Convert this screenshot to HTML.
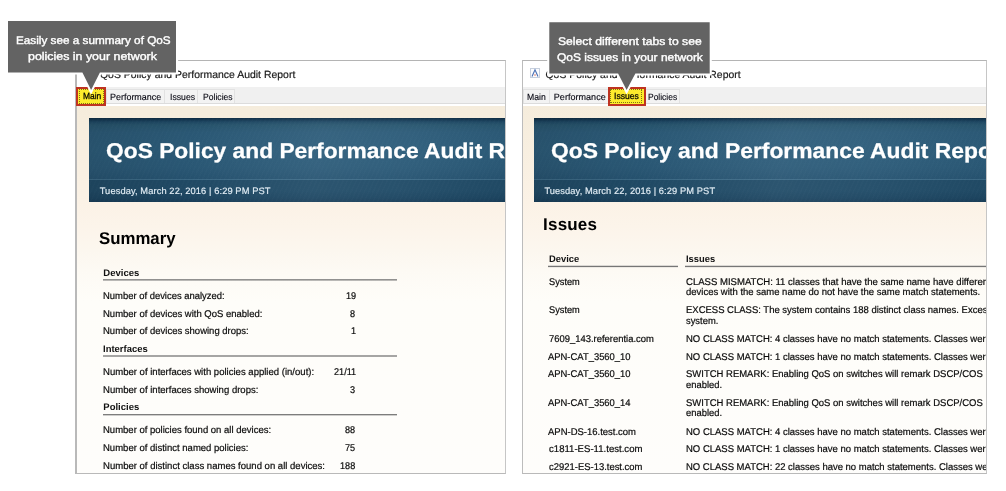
<!DOCTYPE html>
<html lang="en">
<head>
<meta charset="utf-8">
<title>QoS Policy and Performance Audit Report</title>
<style>
*{box-sizing:border-box;margin:0;padding:0}
html,body{width:1006px;height:491px;background:#fff;overflow:hidden}
body{position:relative;font-family:"Liberation Sans",sans-serif;color:#1c1c1c;font-size:10px}
.win{will-change:transform;position:absolute;top:60px;height:414px;border:1px solid #b4b4b4;border-right-color:#c6c6c6;border-bottom-color:#b9b9b9;background:#fff;overflow:hidden}
#w1{left:75px;width:431px;border-left:2px solid #b9b9b9}
#w2{left:522px;width:465px;border-left-color:#bcbcbc}
.t{position:absolute;white-space:pre;text-rendering:geometricPrecision;transform-origin:0 0;-webkit-text-stroke:0.2px currentColor}
.cb{-webkit-text-stroke:0.38px #fff}
.t.tx{-webkit-text-stroke:0.12px currentColor}
.t.ty{-webkit-text-stroke:0.25px #000}
.bt{-webkit-text-stroke:0.25px #fff}
.dt{-webkit-text-stroke:0.15px #e2edf5}
.ovc{position:absolute;left:0;top:0;width:1006px;height:491px;z-index:6;will-change:transform}
.tabs{position:absolute;left:0;right:0;top:26px;height:17px;background:#f0f0f0;border-bottom:1px solid #dcdcdc}
.tb{position:absolute;top:28px;height:14px;border:1px solid #e2e2e2;border-bottom:0;background:#f3f3f3}
.page{position:absolute;left:0;right:0;top:45px;bottom:0;background:linear-gradient(#f5ecdc 0,#f6eddd 12px,#fbf2e6 96px,#fcf4ea 120px,#fcf7ef 145px,#fdfaf4 165px,#fefdf9 195px,#fefdfb 100%)}
.ban{position:absolute;top:57px;height:84px;right:0;background:linear-gradient(100deg,rgba(0,0,0,.12) 0,rgba(0,0,0,.04) 25%,rgba(255,255,255,.05) 55%,rgba(255,255,255,.03) 75%,rgba(0,0,0,.04) 100%),repeating-linear-gradient(115deg,rgba(255,255,255,.013) 0,rgba(255,255,255,.013) 1.5px,rgba(0,0,0,0) 1.5px,rgba(0,0,0,0) 4px),linear-gradient(#0e2c43 0,#153a55 2px,#1f4a66 4px,#28566f 7px,#2c5b79 14px,#2d5d7b 30px,#2b5a78 50px,#275472 61px,#3c6a87 61px,#3c6a87 62px,#214c68 62px,#214c68 72px,#1d4662 80px,#193f5a 84px)}
.ln{position:absolute;height:2px}
.l1{background:linear-gradient(rgba(118,118,118,.8) 0,rgba(118,118,118,.8) 1px,rgba(118,118,118,.5) 1px,rgba(118,118,118,.5) 2px)}
.l2{background:linear-gradient(rgba(118,118,118,.65) 0,rgba(118,118,118,.65) 1px,rgba(118,118,118,.65) 1px,rgba(118,118,118,.65) 2px)}
.l3{background:linear-gradient(rgba(118,118,118,.95) 0,rgba(118,118,118,.95) 1px,rgba(118,118,118,.35) 1px,rgba(118,118,118,.35) 2px)}
.l4{height:3px;background:linear-gradient(rgba(118,118,118,.25) 0,rgba(118,118,118,.25) 1px,rgba(118,118,118,1) 1px,rgba(118,118,118,1) 2px,rgba(118,118,118,.12) 2px,rgba(118,118,118,.12) 3px)}
.hl{position:absolute;background:#fdeb2c;border:2px solid #be3321;z-index:3}
.hl i{position:absolute;left:1px;top:0;right:0;bottom:0;border:1px dotted rgba(50,35,0,.6)}
.ptr{position:absolute;z-index:5}
</style>
</head>
<body>

<div class="win" id="w1">
<div class="tabs"></div>
<div class="tb" style="left:29px;width:59px"></div>
<div class="tb" style="left:87px;width:34px"></div>
<div class="tb" style="left:120px;width:38px"></div>
<div class="page"></div>
<div class="ban" style="left:12px"></div>
<div class="ln l1" style="left:26px;top:218px;width:294px"></div>
<div class="ln l2" style="left:26px;top:294px;width:294px"></div>
<div class="ln l3" style="left:26px;top:353px;width:294px"></div>
<div class="t" style="left:23.00px;top:8px;font-size:10.4px;line-height:13px;letter-spacing:0.033px;color:#1a1a1a">QoS Policy and Performance Audit Report</div>
<div class="t tx" style="left:32.80px;top:30px;font-size:9.0px;line-height:12px;letter-spacing:0.000px;color:#050510;transform:scaleX(0.9939)">Performance</div>
<div class="t tx" style="left:92.50px;top:30px;font-size:9.0px;line-height:12px;letter-spacing:0.000px;color:#050510;transform:scaleX(0.9619)">Issues</div>
<div class="t tx" style="left:125.60px;top:30px;font-size:9.0px;line-height:12px;letter-spacing:0.000px;color:#050510;transform:scaleX(0.9552)">Policies</div>
<div class="t bt" style="left:29.20px;top:77px;font-size:21.4px;line-height:26px;letter-spacing:0.000px;color:#ffffff;transform:scaleX(1.0647);font-weight:bold">QoS Policy and Performance Audit Report</div>
<div class="t dt" style="left:22.70px;top:124px;font-size:9.3px;line-height:12px;letter-spacing:0.098px;color:#e2edf5">Tuesday, March 22, 2016 | 6:29 PM PST</div>
<div class="t" style="left:22.40px;top:167px;font-size:17px;line-height:21px;letter-spacing:0.000px;color:#000;transform:scaleX(0.9881);font-weight:bold;-webkit-text-stroke:0">Summary</div>
<div class="t" style="left:26.30px;top:206px;font-size:9.5px;line-height:13px;letter-spacing:0.011px;color:#111;font-weight:bold;-webkit-text-stroke:0">Devices</div>
<div class="t" style="left:26.30px;top:229px;font-size:9.8px;line-height:13px;letter-spacing:0.000px;color:#0a0a0a;transform:scaleX(0.9625)">Number of devices analyzed:</div>
<div class="t" style="left:26.30px;top:247px;font-size:9.8px;line-height:13px;letter-spacing:0.000px;color:#0a0a0a;transform:scaleX(0.9693)">Number of devices with QoS enabled:</div>
<div class="t" style="left:26.30px;top:264px;font-size:9.8px;line-height:13px;letter-spacing:0.000px;color:#0a0a0a;transform:scaleX(0.9694)">Number of devices showing drops:</div>
<div class="t" style="left:26.30px;top:282px;font-size:9.5px;line-height:13px;letter-spacing:0.000px;color:#111;transform:scaleX(0.9955);font-weight:bold;-webkit-text-stroke:0">Interfaces</div>
<div class="t" style="left:26.30px;top:305px;font-size:9.8px;line-height:13px;letter-spacing:0.000px;color:#0a0a0a;transform:scaleX(0.9741)">Number of interfaces with policies applied (in/out):</div>
<div class="t" style="left:26.30px;top:323px;font-size:9.8px;line-height:13px;letter-spacing:0.000px;color:#0a0a0a;transform:scaleX(0.9740)">Number of interfaces showing drops:</div>
<div class="t" style="left:26.30px;top:340px;font-size:9.5px;line-height:13px;letter-spacing:0.011px;color:#111;font-weight:bold;-webkit-text-stroke:0">Policies</div>
<div class="t" style="left:26.30px;top:363px;font-size:9.8px;line-height:13px;letter-spacing:0.000px;color:#0a0a0a;transform:scaleX(0.9707)">Number of policies found on all devices:</div>
<div class="t" style="left:26.30px;top:381px;font-size:9.8px;line-height:13px;letter-spacing:0.000px;color:#0a0a0a;transform:scaleX(0.9710)">Number of distinct named policies:</div>
<div class="t" style="left:26.30px;top:399px;font-size:9.8px;line-height:13px;letter-spacing:0.000px;color:#0a0a0a;transform:scaleX(0.9730)">Number of distinct class names found on all devices:</div>
<div class="t" style="left:269.18px;top:229px;font-size:9.8px;line-height:13px;letter-spacing:0.000px;color:#0a0a0a;transform:scaleX(0.9300)">19</div>
<div class="t" style="left:273.32px;top:247px;font-size:9.8px;line-height:13px;letter-spacing:0.000px;color:#0a0a0a;transform:scaleX(0.9300)">8</div>
<div class="t" style="left:274.25px;top:264px;font-size:9.8px;line-height:13px;letter-spacing:0.000px;color:#0a0a0a;transform:scaleX(0.9300)">1</div>
<div class="t" style="left:257.19px;top:305px;font-size:9.8px;line-height:13px;letter-spacing:0.000px;color:#0a0a0a;transform:scaleX(0.9300)">21/11</div>
<div class="t" style="left:273.32px;top:323px;font-size:9.8px;line-height:13px;letter-spacing:0.000px;color:#0a0a0a;transform:scaleX(0.9300)">3</div>
<div class="t" style="left:268.25px;top:363px;font-size:9.8px;line-height:13px;letter-spacing:0.000px;color:#0a0a0a;transform:scaleX(0.9300)">88</div>
<div class="t" style="left:268.25px;top:381px;font-size:9.8px;line-height:13px;letter-spacing:0.000px;color:#0a0a0a;transform:scaleX(0.9300)">75</div>
<div class="t" style="left:263.19px;top:399px;font-size:9.8px;line-height:13px;letter-spacing:0.000px;color:#0a0a0a;transform:scaleX(0.9300)">188</div>
</div>

<div class="win" id="w2">
<svg class="t" style="left:6.6px;top:7px" width="10" height="10" viewBox="0 0 10 10"><rect x="0.5" y="0.5" width="9" height="9" fill="#fbfcfe" stroke="#c6cfdd"/><path d="M2 8.6 L5 1.8 L8 8.6" fill="none" stroke="#4a70b4" stroke-width="1.15"/><circle cx="5" cy="7" r="0.75" fill="#d4604a"/></svg>
<div class="tabs"></div>
<div class="tb" style="left:0;width:27px"></div>
<div class="tb" style="left:26px;width:60px"></div>
<div class="tb" style="left:122px;width:35px"></div>
<div class="page"></div>
<div class="ban" style="left:11px"></div>
<div class="ln l4" style="left:25px;top:204px;width:130px"></div>
<div class="ln l4" style="left:162px;top:204px;width:320px"></div>
<div class="t" style="left:22.50px;top:8px;font-size:10.4px;line-height:13px;letter-spacing:0.028px;color:#1a1a1a">QoS Policy and Performance Audit Report</div>
<div class="t tx" style="left:3.80px;top:30px;font-size:9.0px;line-height:12px;letter-spacing:0.000px;color:#050510;transform:scaleX(0.9589)">Main</div>
<div class="t tx" style="left:30.80px;top:30px;font-size:9.0px;line-height:12px;letter-spacing:0.038px;color:#050510">Performance</div>
<div class="t tx" style="left:124.70px;top:30px;font-size:9.0px;line-height:12px;letter-spacing:0.000px;color:#050510;transform:scaleX(0.9393)">Policies</div>
<div class="t bt" style="left:27.60px;top:77px;font-size:21.4px;line-height:26px;letter-spacing:0.000px;color:#ffffff;transform:scaleX(1.0681);font-weight:bold">QoS Policy and Performance Audit Report</div>
<div class="t dt" style="left:21.40px;top:124px;font-size:9.3px;line-height:12px;letter-spacing:0.095px;color:#e2edf5">Tuesday, March 22, 2016 | 6:29 PM PST</div>
<div class="t" style="left:20.10px;top:153px;font-size:17px;line-height:21px;letter-spacing:0.186px;color:#000;font-weight:bold;-webkit-text-stroke:0">Issues</div>
<div class="t" style="left:25.60px;top:192px;font-size:9.5px;line-height:13px;letter-spacing:0.000px;color:#111;transform:scaleX(0.9852);font-weight:bold;-webkit-text-stroke:0">Device</div>
<div class="t" style="left:162.50px;top:192px;font-size:9.5px;line-height:13px;letter-spacing:0.000px;color:#111;transform:scaleX(0.9866);font-weight:bold;-webkit-text-stroke:0">Issues</div>
<div class="t" style="left:25.60px;top:215px;font-size:9.8px;line-height:13px;letter-spacing:0.000px;color:#0a0a0a;transform:scaleX(0.9415)">System</div>
<div class="t" style="left:162.50px;top:215px;font-size:9.8px;line-height:13px;letter-spacing:0.000px;color:#0a0a0a;transform:scaleX(0.9747)">CLASS MISMATCH: 11 classes that have the same name have different</div>
<div class="t" style="left:162.50px;top:225px;font-size:9.8px;line-height:13px;letter-spacing:0.000px;color:#0a0a0a;transform:scaleX(0.9699)">devices with the same name do not have the same match statements.</div>
<div class="t" style="left:25.60px;top:243px;font-size:9.8px;line-height:13px;letter-spacing:0.000px;color:#0a0a0a;transform:scaleX(0.9415)">System</div>
<div class="t" style="left:162.50px;top:243px;font-size:9.8px;line-height:13px;letter-spacing:0.000px;color:#0a0a0a;transform:scaleX(0.9683)">EXCESS CLASS: The system contains 188 distinct class names. Excessive</div>
<div class="t" style="left:162.50px;top:254px;font-size:9.8px;line-height:13px;letter-spacing:0.000px;color:#0a0a0a;transform:scaleX(0.9568)">system.</div>
<div class="t" style="left:25.60px;top:272px;font-size:9.8px;line-height:13px;letter-spacing:0.000px;color:#0a0a0a;transform:scaleX(0.9626)">7609_143.referentia.com</div>
<div class="t" style="left:162.50px;top:272px;font-size:9.8px;line-height:13px;letter-spacing:0.000px;color:#0a0a0a;transform:scaleX(0.9696)">NO CLASS MATCH: 4 classes have no match statements. Classes were</div>
<div class="t" style="left:25.30px;top:290px;font-size:9.8px;line-height:13px;letter-spacing:0.000px;color:#0a0a0a;transform:scaleX(0.9617)">APN-CAT_3560_10</div>
<div class="t" style="left:162.50px;top:290px;font-size:9.8px;line-height:13px;letter-spacing:0.000px;color:#0a0a0a;transform:scaleX(0.9696)">NO CLASS MATCH: 1 classes have no match statements. Classes were</div>
<div class="t" style="left:25.30px;top:307px;font-size:9.8px;line-height:13px;letter-spacing:0.000px;color:#0a0a0a;transform:scaleX(0.9617)">APN-CAT_3560_10</div>
<div class="t" style="left:162.50px;top:307px;font-size:9.8px;line-height:13px;letter-spacing:0.000px;color:#0a0a0a;transform:scaleX(0.9682)">SWITCH REMARK: Enabling QoS on switches will remark DSCP/COS</div>
<div class="t" style="left:162.50px;top:318px;font-size:9.8px;line-height:13px;letter-spacing:0.000px;color:#0a0a0a;transform:scaleX(0.9602)">enabled.</div>
<div class="t" style="left:25.30px;top:336px;font-size:9.8px;line-height:13px;letter-spacing:0.000px;color:#0a0a0a;transform:scaleX(0.9617)">APN-CAT_3560_14</div>
<div class="t" style="left:162.50px;top:336px;font-size:9.8px;line-height:13px;letter-spacing:0.000px;color:#0a0a0a;transform:scaleX(0.9682)">SWITCH REMARK: Enabling QoS on switches will remark DSCP/COS</div>
<div class="t" style="left:162.50px;top:346px;font-size:9.8px;line-height:13px;letter-spacing:0.000px;color:#0a0a0a;transform:scaleX(0.9602)">enabled.</div>
<div class="t" style="left:25.30px;top:365px;font-size:9.8px;line-height:13px;letter-spacing:0.000px;color:#0a0a0a;transform:scaleX(0.9674)">APN-DS-16.test.com</div>
<div class="t" style="left:162.50px;top:365px;font-size:9.8px;line-height:13px;letter-spacing:0.000px;color:#0a0a0a;transform:scaleX(0.9696)">NO CLASS MATCH: 4 classes have no match statements. Classes were</div>
<div class="t" style="left:25.60px;top:382px;font-size:9.8px;line-height:13px;letter-spacing:0.000px;color:#0a0a0a;transform:scaleX(0.9789)">c1811-ES-11.test.com</div>
<div class="t" style="left:162.50px;top:382px;font-size:9.8px;line-height:13px;letter-spacing:0.000px;color:#0a0a0a;transform:scaleX(0.9696)">NO CLASS MATCH: 1 classes have no match statements. Classes were</div>
<div class="t" style="left:25.60px;top:400px;font-size:9.8px;line-height:13px;letter-spacing:0.000px;color:#0a0a0a;transform:scaleX(0.9642)">c2921-ES-13.test.com</div>
<div class="t" style="left:162.50px;top:400px;font-size:9.8px;line-height:13px;letter-spacing:0.000px;color:#0a0a0a;transform:scaleX(0.9685)">NO CLASS MATCH: 22 classes have no match statements. Classes were</div>
</div>

<div class="hl" style="left:76px;top:87px;width:30px;height:19px"><i></i></div>
<div class="hl" style="left:608px;top:87px;width:38px;height:19px"><i style="left:0;right:2px;bottom:1px"></i></div>

<svg class="ptr" style="left:0;top:0" width="1006" height="491" viewBox="0 0 1006 491">
<path d="M8 21 H176 V72.4 H99.9 L91.1 89.9 L82.4 72.4 H8 Z" fill="#636363" stroke="#ffffff" stroke-width="4.2" stroke-linejoin="miter" paint-order="stroke"/>
<path d="M549.3 22.2 H709.7 V73.4 H635.4 L626.6 90 L618.1 73.4 H549.3 Z" fill="#636363" stroke="#ffffff" stroke-width="4.2" stroke-linejoin="miter" paint-order="stroke"/>
</svg>
<div class="ovc">
<div class="t tx ty" style="left:82.70px;top:90px;font-size:9.0px;line-height:12px;letter-spacing:0.000px;color:#000;transform:scaleX(0.9384)">Main</div>
<div class="t tx ty" style="left:614.00px;top:90px;font-size:9.0px;line-height:12px;letter-spacing:0.000px;color:#000;transform:scaleX(0.9543)">Issues</div>
<div class="t cb" style="left:15.90px;top:34px;font-size:11px;line-height:14px;letter-spacing:0.000px;color:#ffffff;transform:scaleX(1.0675)">Easily see a summary of QoS</div>
<div class="t cb" style="left:28.30px;top:50px;font-size:11px;line-height:14px;letter-spacing:0.000px;color:#ffffff;transform:scaleX(1.1278)">policies in your network</div>
<div class="t cb" style="left:558.40px;top:35px;font-size:11px;line-height:14px;letter-spacing:0.000px;color:#ffffff;transform:scaleX(1.1052)">Select different tabs to see</div>
<div class="t cb" style="left:557.10px;top:51px;font-size:11px;line-height:14px;letter-spacing:0.000px;color:#ffffff;transform:scaleX(1.0894)">QoS issues in your network</div>
</div>

</body>
</html>
